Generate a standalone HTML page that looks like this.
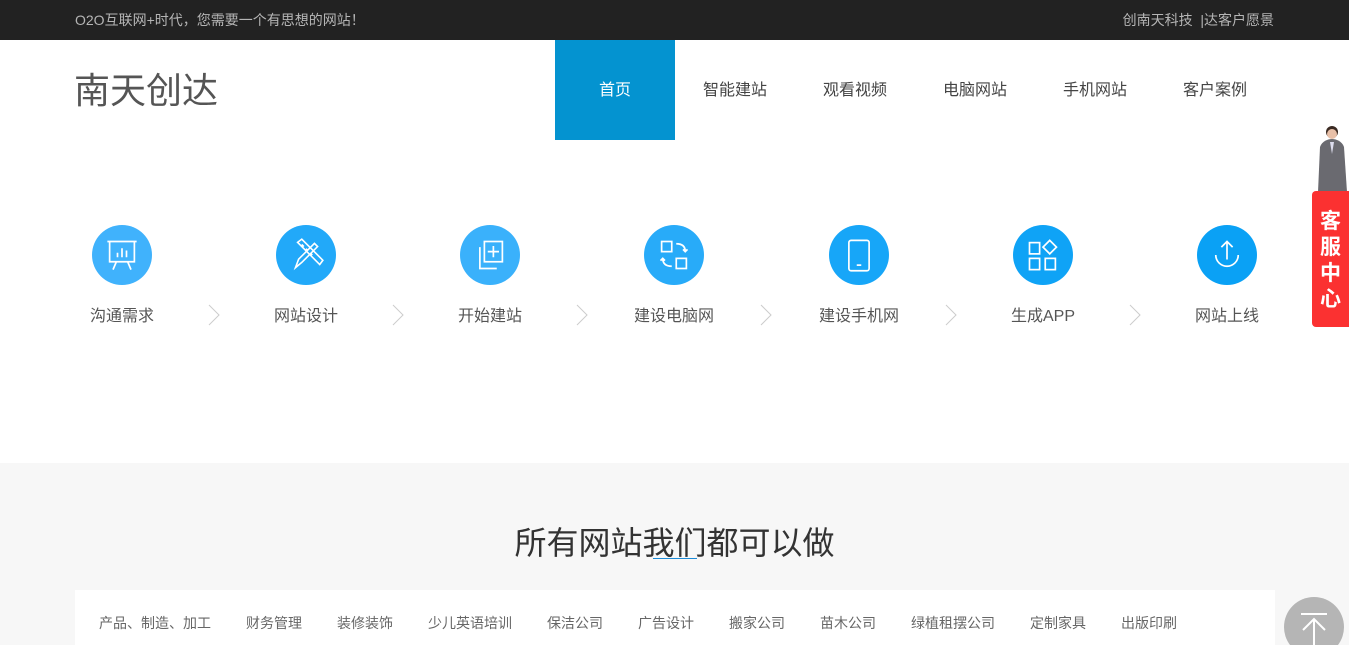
<!DOCTYPE html>
<html><head><meta charset="utf-8"><style>
*{margin:0;padding:0;box-sizing:border-box}
html,body{width:1349px;height:645px;overflow:hidden}
body{background:#fff;font-family:"Liberation Sans","Noto Sans CJK SC",sans-serif;position:relative}
.top{height:40px;background:#222;color:#b5b5b5;font-size:14px;position:relative}
.top .l{position:absolute;left:75px;top:10px}
.top .r{position:absolute;right:75px;top:10px}
.logo{position:absolute;left:74px;top:62px;font-size:36px;color:#555}
.nav{position:absolute;left:555px;top:40px;display:flex}
.nav div{width:120px;height:100px;line-height:102px;text-align:center;font-size:16px;color:#444}
.nav .on{background:#0493d0;color:#fff}
.step{position:absolute;top:225px;width:160px;text-align:center}
.step .c{width:60px;height:60px;border-radius:50%;margin:0 auto;display:flex;align-items:center;justify-content:center}
.step .t{margin-top:17px;font-size:16px;color:#555}
.chev{position:absolute;top:304px;width:12px;height:22px}
.gray{position:absolute;left:0;top:463px;width:1349px;height:182px;background:#f7f7f7}
.title{position:absolute;top:518px;left:0;width:1349px;text-align:center;font-size:32px;color:#333}
.ul{position:absolute;left:653px;top:558px;width:44px;height:1px;background:#1b8bd8}
.box{position:absolute;left:75px;top:590px;width:1200px;height:60px;background:#fff}
.box span{position:absolute;top:23px;font-size:14px;color:#666}
.kf{position:absolute;left:1312px;top:191px;width:37px;height:136px;background:#fb3131;border-radius:4px 0 0 4px;color:#fff;font-weight:bold;font-size:21px;text-align:center;line-height:26px;padding-top:18px}
.totop{position:absolute;left:1284px;top:597px;width:60px;height:60px;border-radius:50%;background:#b5b5b5}
</style></head><body>
<div class="top"><span class="l">O2O互联网+时代，您需要一个有思想的网站！</span><span class="r">创南天科技 &nbsp;|达客户愿景</span></div>
<div class="logo">南天创达</div>
<div class="nav"><div class="on">首页</div><div>智能建站</div><div>观看视频</div><div>电脑网站</div><div>手机网站</div><div>客户案例</div></div>

<div class="step" style="left:42px"><div class="c" style="background:#40b2fc"><svg width="36" height="36" viewBox="0 0 32 32" fill="none" stroke="#fff" stroke-width="1.5"><path d="M3 4h26M5 4v18h22V4M11 22l-3 7M21 22l3 7M12 18v-4M16 18v-8M20 18v-6"/></svg></div><div class="t">沟通需求</div></div>
<div class="step" style="left:226px"><div class="c" style="background:#22a9f9"><svg width="38" height="38" viewBox="0 0 36 36" fill="none" stroke="#fff" stroke-width="1.5"><path d="M8 30l3-8L26 7l3 3L14 25zM8 30l6-5M10 6l4-3 20 20-3 4zM14 8l2 2M18 12l2 2M22 16l2 2"/></svg></div><div class="t">网站设计</div></div>
<div class="step" style="left:410px"><div class="c" style="background:#3ab1fb"><svg width="36" height="36" viewBox="0 0 32 32" fill="none" stroke="#fff" stroke-width="1.5"><rect x="11" y="4" width="16" height="18"/><path d="M7 9v19h15M19 8v10M14 13h10"/></svg></div><div class="t">开始建站</div></div>
<div class="step" style="left:594px"><div class="c" style="background:#28abf9"><svg width="36" height="36" viewBox="0 0 32 32" fill="none" stroke="#fff" stroke-width="1.5"><rect x="5" y="4" width="9" height="9"/><rect x="18" y="19" width="9" height="9"/><path d="M18 6c5 0 8 2 8 7M24 11l2 2 2-2M14 26c-5 0-8-2-8-7M4 21l2-2 2 2"/></svg></div><div class="t">建设电脑网</div></div>
<div class="step" style="left:779px"><div class="c" style="background:#17a6f8"><svg width="36" height="36" viewBox="0 0 32 32" fill="none" stroke="#fff" stroke-width="1.5"><rect x="7" y="3" width="18" height="27" rx="2"/><path d="M14 25h4"/></svg></div><div class="t">建设手机网</div></div>
<div class="step" style="left:963px"><div class="c" style="background:#0fa3f6"><svg width="36" height="36" viewBox="0 0 32 32" fill="none" stroke="#fff" stroke-width="1.5"><rect x="4" y="5" width="9" height="10"/><rect x="4" y="19" width="9" height="10"/><rect x="18" y="19" width="9" height="10"/><path d="M22 3l6 6-6 6-6-6z"/></svg></div><div class="t">生成APP</div></div>
<div class="step" style="left:1147px"><div class="c" style="background:#0aa1f5"><svg width="36" height="36" viewBox="0 0 32 32" fill="none" stroke="#fff" stroke-width="1.5"><path d="M16 4v16M11 9l5-5 5 5M6 16a10 10 0 0 0 20 0"/></svg></div><div class="t">网站上线</div></div>

<svg class="chev" style="left:208px" viewBox="0 0 12 22"><path d="M1 1l10 10L1 21" fill="none" stroke="#ccc"/></svg>
<svg class="chev" style="left:392px" viewBox="0 0 12 22"><path d="M1 1l10 10L1 21" fill="none" stroke="#ccc"/></svg>
<svg class="chev" style="left:576px" viewBox="0 0 12 22"><path d="M1 1l10 10L1 21" fill="none" stroke="#ccc"/></svg>
<svg class="chev" style="left:760px" viewBox="0 0 12 22"><path d="M1 1l10 10L1 21" fill="none" stroke="#ccc"/></svg>
<svg class="chev" style="left:945px" viewBox="0 0 12 22"><path d="M1 1l10 10L1 21" fill="none" stroke="#ccc"/></svg>
<svg class="chev" style="left:1129px" viewBox="0 0 12 22"><path d="M1 1l10 10L1 21" fill="none" stroke="#ccc"/></svg>

<div class="gray"></div>
<div class="title">所有网站我们都可以做</div>
<div class="ul"></div>
<div class="box">
<span style="left:24px">产品、制造、加工</span><span style="left:171px">财务管理</span><span style="left:262px">装修装饰</span><span style="left:353px">少儿英语培训</span><span style="left:472px">保洁公司</span><span style="left:563px">广告设计</span><span style="left:654px">搬家公司</span><span style="left:745px">苗木公司</span><span style="left:836px">绿植租摆公司</span><span style="left:955px">定制家具</span><span style="left:1046px">出版印刷</span>
</div>

<svg style="position:absolute;left:1312px;top:122px" width="37" height="70" viewBox="0 0 37 70"><circle cx="20" cy="10" r="6" fill="#3a2a22"/><circle cx="20" cy="12" r="5" fill="#e8c0a8"/><path d="M6 70l2-45c2-6 8-8 12-8s10 2 12 8l3 45z" fill="#6a6a70"/><path d="M18 20l2 12 2-12z" fill="#dde"/></svg>
<div class="kf">客<br>服<br>中<br>心</div>
<div class="totop"><svg width="60" height="60" viewBox="0 0 60 60" fill="none" stroke="#fff" stroke-width="2"><path d="M17 17h26M30 22v26M19 33l11-11 11 11"/></svg></div>
</body></html>
